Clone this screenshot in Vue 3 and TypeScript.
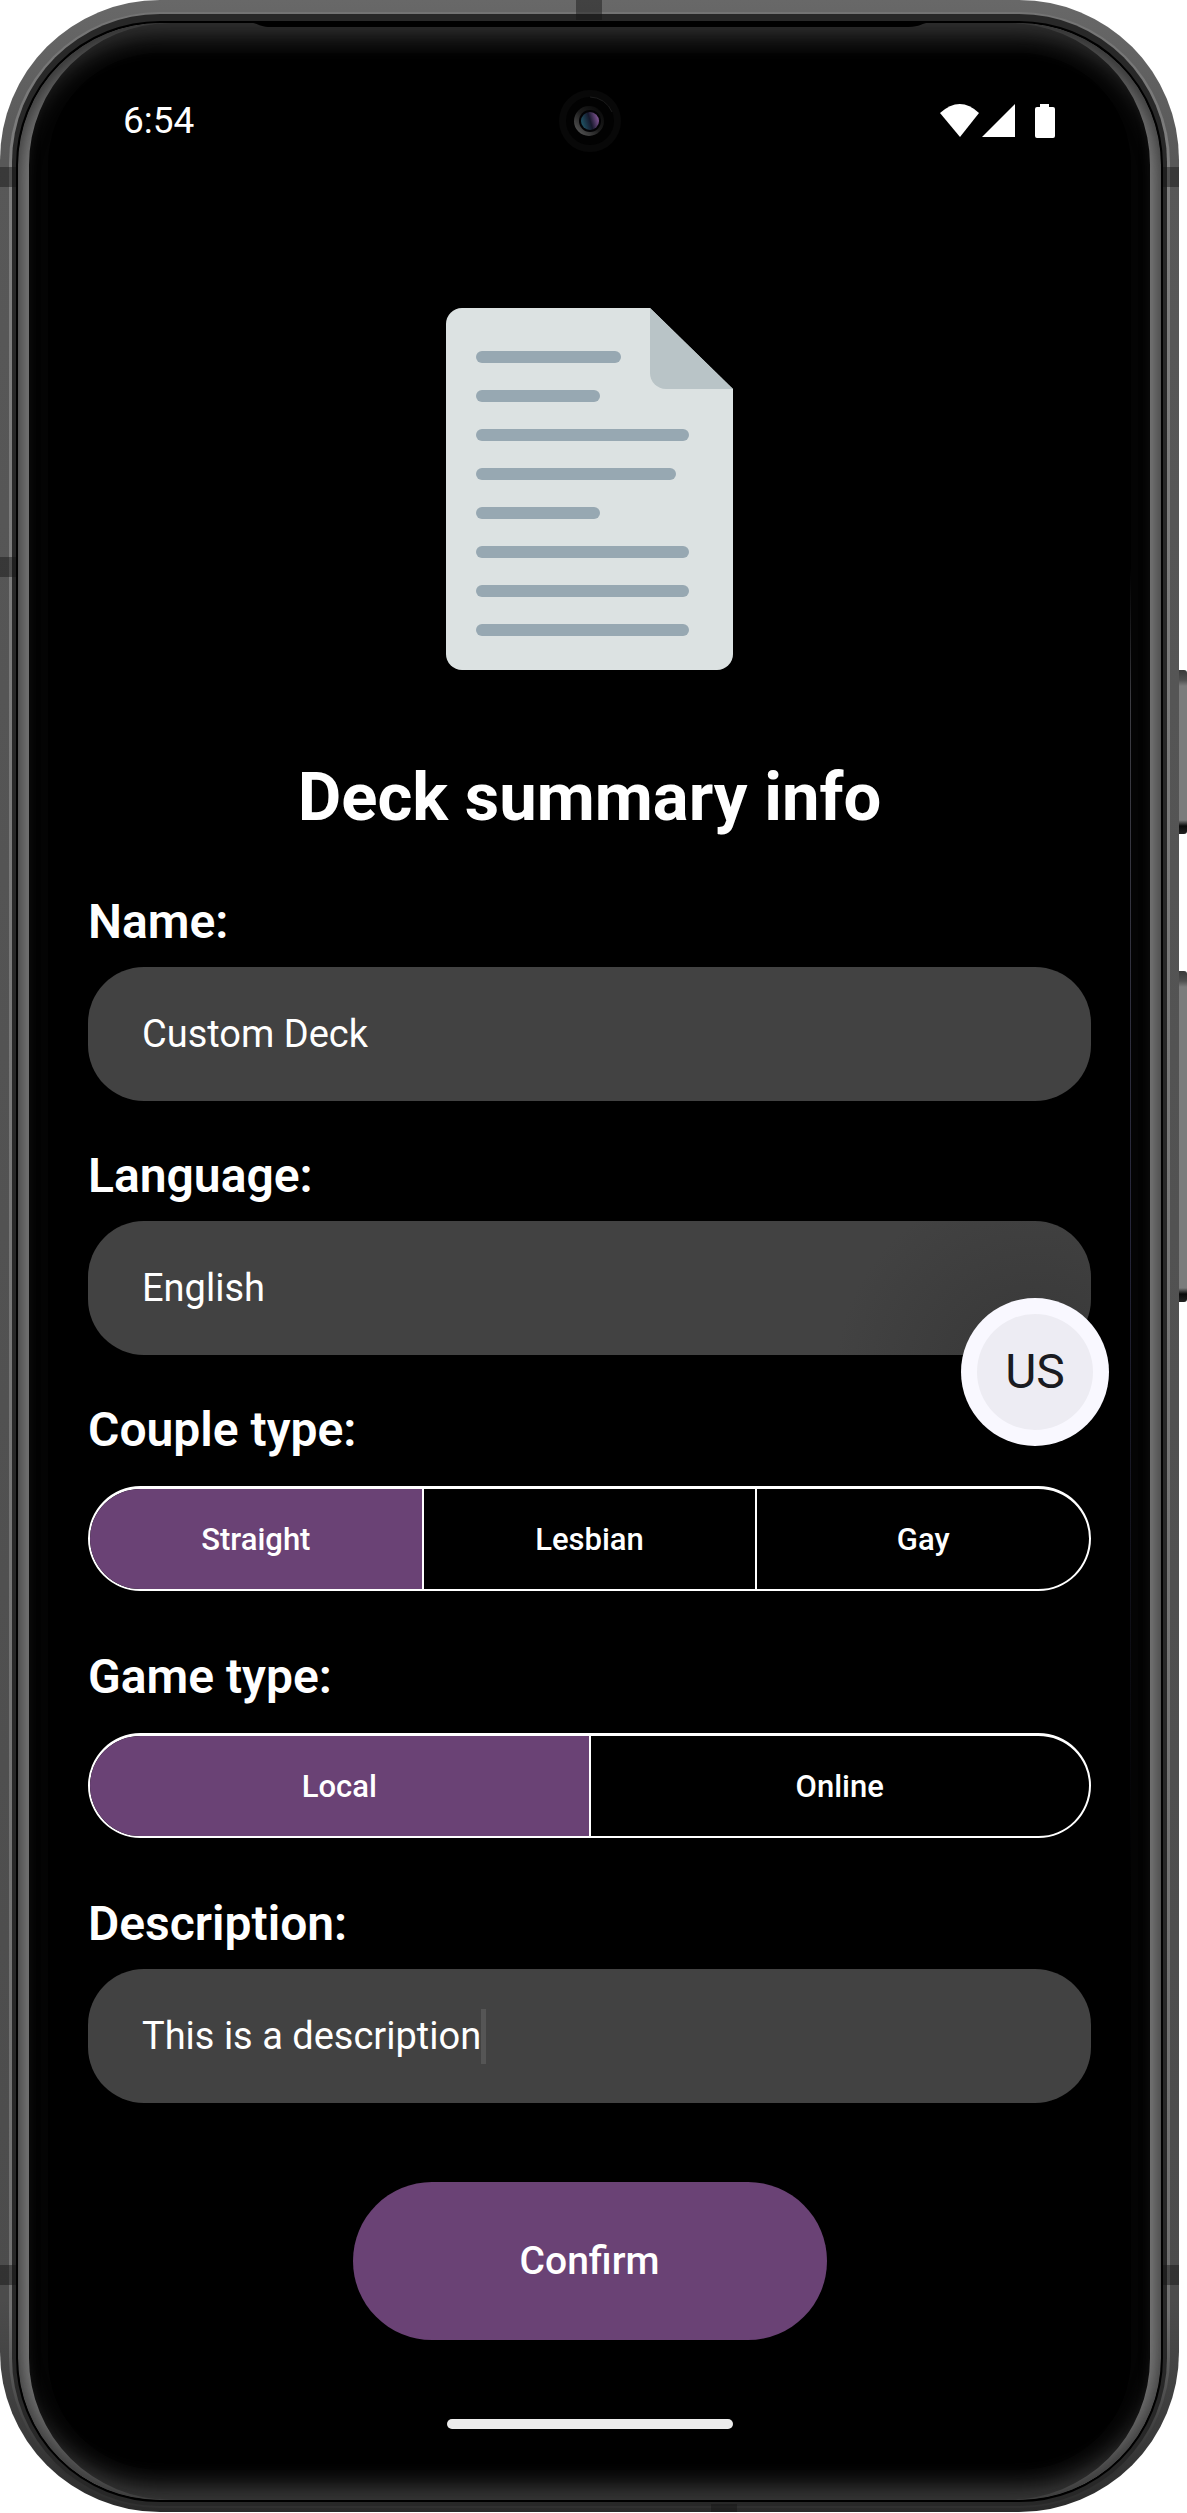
<script setup lang="ts">
import { ref } from 'vue'

const name = ref('Custom Deck')
const language = ref('English')
const description = ref('This is a description')

const coupleTypes = ['Straight', 'Lesbian', 'Gay']
const gameTypes = ['Local', 'Online']
const coupleType = ref('Straight')
const gameType = ref('Local')

const paperLines = [145, 124, 213, 200, 124, 213, 213, 213]
</script>

<template>
  <div class="stage">
    <div class="phone">
      <i class="band left high"></i>
      <i class="band left mid"></i>
      <i class="band left low"></i>
      <i class="band right high"></i>
      <i class="band right low"></i>
      <i class="band top"></i>
      <i class="band bottom"></i>
      <div class="edge">
        <div class="groove">
          <div class="glass">
            <svg class="earpiece" viewBox="0 0 680 5" preserveAspectRatio="none" aria-hidden="true">
              <path d="M0 0H680C668 1 668 5 656 5H24C12 5 12 1 0 0Z" fill="#000" />
            </svg>
            <header class="status">
              <time>6:54</time>
              <svg class="camera" viewBox="0 0 64 64" aria-hidden="true">
                <defs>
                  <linearGradient id="ring" x1="0" y1="1" x2="1" y2="0">
                    <stop offset="0" stop-color="#626262" />
                    <stop offset=".5" stop-color="#1c1c1c" />
                    <stop offset="1" stop-color="#050505" />
                  </linearGradient>
                  <linearGradient id="lens" x1="0" y1=".6" x2="1" y2=".3">
                    <stop offset="0" stop-color="#1f5566" />
                    <stop offset=".5" stop-color="#16182c" />
                    <stop offset="1" stop-color="#8a5a9c" />
                  </linearGradient>
                </defs>
                <circle cx="32" cy="32" r="31" fill="#080808" />
                <circle cx="32" cy="32" r="24" fill="#020202" />
                <path d="M32 8A24 24 0 0 1 54 23" fill="none" stroke="#1c1c1c" />
                <circle cx="31" cy="32" r="15" fill="url(#ring)" />
                <circle cx="32" cy="32" r="11" fill="#030305" />
                <circle cx="32" cy="32" r="9" fill="url(#lens)" />
              </svg>
              <svg class="indicators" viewBox="0 0 116 34" aria-hidden="true">
                <path d="M0 9Q20-9 39 9L20 33Z" fill="#fff" />
                <path d="M42 33L75 0V33Z" fill="#fff" />
                <path d="M100 0h9v3h4q2 0 2 2v27q0 2-2 2H97q-2 0-2-2V5q0-2 2-2h3Z" fill="#fff" />
              </svg>
            </header>

            <main>
              <svg class="paper" viewBox="0 0 287 362" aria-hidden="true">
                <path d="M16 0H204L287 81V346a16 16 0 0 1-16 16H16a16 16 0 0 1-16-16V16A16 16 0 0 1 16 0Z" fill="#dce2e2" />
                <path d="M204 0L287 81H220a16 16 0 0 1-16-16Z" fill="#b9c4c7" />
                <rect
                  v-for="(w, i) in paperLines"
                  :key="i"
                  x="30"
                  :y="43 + i * 39"
                  :width="w"
                  height="12"
                  rx="6"
                  fill="#97a8b2"
                />
              </svg>
              <h1>Deck summary info</h1>

              <form @submit.prevent>
                <div class="field">
                  <label for="name">Name:</label>
                  <input id="name" v-model="name" class="box" type="text" />
                </div>
                <div class="field">
                  <label for="language">Language:</label>
                  <div class="anchor">
                    <input id="language" v-model="language" class="box shaded" type="text" />
                    <button class="region" type="button"><span>US</span></button>
                  </div>
                </div>
                <fieldset class="field">
                  <legend>Couple type:</legend>
                  <div class="segments">
                    <label v-for="t in coupleTypes" :key="t" :class="{ on: coupleType === t }">
                      <input v-model="coupleType" type="radio" name="couple" :value="t" />{{ t }}
                    </label>
                  </div>
                </fieldset>
                <fieldset class="field">
                  <legend>Game type:</legend>
                  <div class="segments">
                    <label v-for="t in gameTypes" :key="t" :class="{ on: gameType === t }">
                      <input v-model="gameType" type="radio" name="game" :value="t" />{{ t }}
                    </label>
                  </div>
                </fieldset>
                <div class="field">
                  <label for="description">Description:</label>
                  <div class="box editing">
                    <input id="description" v-model="description" type="text" />
                    <i class="caret"></i>
                  </div>
                </div>
                <button class="confirm" type="submit">Confirm</button>
              </form>
            </main>
            <div class="home"></div>
          </div>
        </div>
      </div>
    </div>
    <i class="side power"></i>
    <i class="side volume"></i>
  </div>
</template>

<style>
body {
  background: #fff;
}
</style>

<style scoped>
* {
  box-sizing: border-box;
}
.stage {
  position: relative;
  padding-right: 8px;
  font-family: Roboto, 'Liberation Sans', sans-serif;
  color: #fff;
}
.phone {
  position: relative;
  padding: 12px 9px 4px;
  border-radius: 160px;
  overflow: hidden;
  background: linear-gradient(#686868, #585858 160px, #4c4c4c 2300px, #3a3a3a 2440px, #2a2a2a);
}
.edge {
  padding: 2px 3px 2px;
  border-radius: 151px;
  background: linear-gradient(#747474, #7e7e7e 160px, #707070 2300px, #303030 2460px);
}
.groove {
  padding: 7px 4px 4px;
  border-radius: 148px;
  background: #282828;
}
.glass {
  position: relative;
  padding: 0 59px 71px;
  border: 2px solid #000;
  border-radius: 144px;
  background: #000;
  box-shadow:
    inset 0 18px 22px -4px #303030,
    inset 0 -18px 22px -4px #3a3a3a,
    inset 11px 0 0 #7b7b7b,
    inset -11px 0 0 #7b7b7b,
    inset 0 0 0 30px #040404;
}
.glass::after {
  content: '';
  position: absolute;
  top: 22%;
  right: 30px;
  width: 1px;
  height: 53%;
  background: linear-gradient(transparent, #3c3c42 10%, #26263a 50%, transparent);
}
.earpiece {
  position: absolute;
  top: -1px;
  left: 20%;
  width: 60%;
  height: 5px;
}
.band {
  position: absolute;
  z-index: 1;
  background: rgba(20, 20, 20, 0.45);
}
.band.left,
.band.right {
  width: 16px;
  height: 20px;
}
.band.left {
  left: 0;
}
.band.right {
  right: 0;
}
.band.high {
  top: 167px;
}
.band.mid {
  top: 557px;
}
.band.low {
  bottom: 227px;
}
.band.top {
  top: 0;
  left: 576px;
  width: 26px;
  height: 20px;
}
.band.bottom {
  bottom: 0;
  left: 711px;
  width: 26px;
  height: 8px;
}
.side {
  position: absolute;
  right: 0;
  width: 8px;
  border-radius: 0 3px 3px 0;
  background: linear-gradient(#3a3a3a, #505050 10px, #7c7c7c 16px, #7c7c7c calc(100% - 14px), #0a0a0a calc(100% - 8px), #222);
}
.power {
  top: 670px;
  height: 164px;
}
.volume {
  top: 971px;
  height: 331px;
}
.status {
  display: grid;
  grid-template-columns: 1fr 64px 1fr;
  align-items: center;
  padding: 66px 46px 0;
}
time {
  font-size: 37px;
  line-height: 44px;
}
.camera {
  width: 64px;
  height: 64px;
  justify-self: center;
}
.indicators {
  width: 116px;
  height: 34px;
  justify-self: end;
}
.paper {
  display: block;
  width: 287px;
  height: 362px;
  margin: 155px auto 0;
}
h1 {
  margin: 87px 0 0;
  font-size: 67px;
  line-height: 80px;
  font-weight: 700;
  text-align: center;
}
form {
  display: flex;
  flex-direction: column;
  gap: 47px;
  margin: 57px 11px 0 11px;
}
.field {
  min-width: 0;
  margin: 0;
  padding: 0;
  border: 0;
}
.field > label,
legend {
  display: block;
  padding: 0;
  margin-bottom: 17px;
  font-size: 48px;
  line-height: 56px;
  font-weight: 600;
}
.box {
  display: block;
  width: 100%;
  height: 134px;
  padding: 0 54px;
  border: 0;
  border-radius: 56px;
  background: #424242;
}
input {
  font: 400 38px Roboto, 'Liberation Sans', sans-serif;
  color: #fff;
  outline: 0;
}
.shaded {
  background: radial-gradient(circle at 946px 160px, #3a3a3a 60px, #424242 200px);
}
.editing {
  display: flex;
  align-items: center;
}
.editing input {
  field-sizing: content;
  padding: 0;
  border: 0;
  background: none;
}
.caret {
  width: 5px;
  height: 55px;
  background: #555;
}
.anchor {
  position: relative;
}
.region {
  position: absolute;
  right: -18px;
  bottom: -91px;
  width: 148px;
  height: 148px;
  padding: 16px;
  border: 0;
  border-radius: 50%;
  background: #f9f8ff;
  font: 400 48px Roboto, 'Liberation Sans', sans-serif;
  color: #1a1b21;
}
.region span {
  display: block;
  border-radius: 50%;
  background: #edecf3;
  line-height: 116px;
}
.segments {
  display: flex;
  height: 105px;
  margin: 11px 0;
  overflow: hidden;
  border: 2px solid #fff;
  border-top-width: 3px;
  border-radius: 53px;
}
.segments label {
  flex: 1;
  display: flex;
  align-items: center;
  justify-content: center;
  font-size: 31px;
  font-weight: 500;
}
.segments label + label {
  border-left: 2px solid #fff;
}
.segments input {
  position: absolute;
  opacity: 0;
  pointer-events: none;
}
.segments .on,
.confirm {
  background: #6a4275;
}
.confirm {
  align-self: center;
  width: 474px;
  height: 158px;
  margin-top: 32px;
  border: 0;
  border-radius: 79px;
  font: 500 39px Roboto, 'Liberation Sans', sans-serif;
  color: #fff;
}
.home {
  width: 286px;
  height: 10px;
  margin: 79px auto 0;
  border-radius: 5px;
  background: #ececec;
}
</style>
